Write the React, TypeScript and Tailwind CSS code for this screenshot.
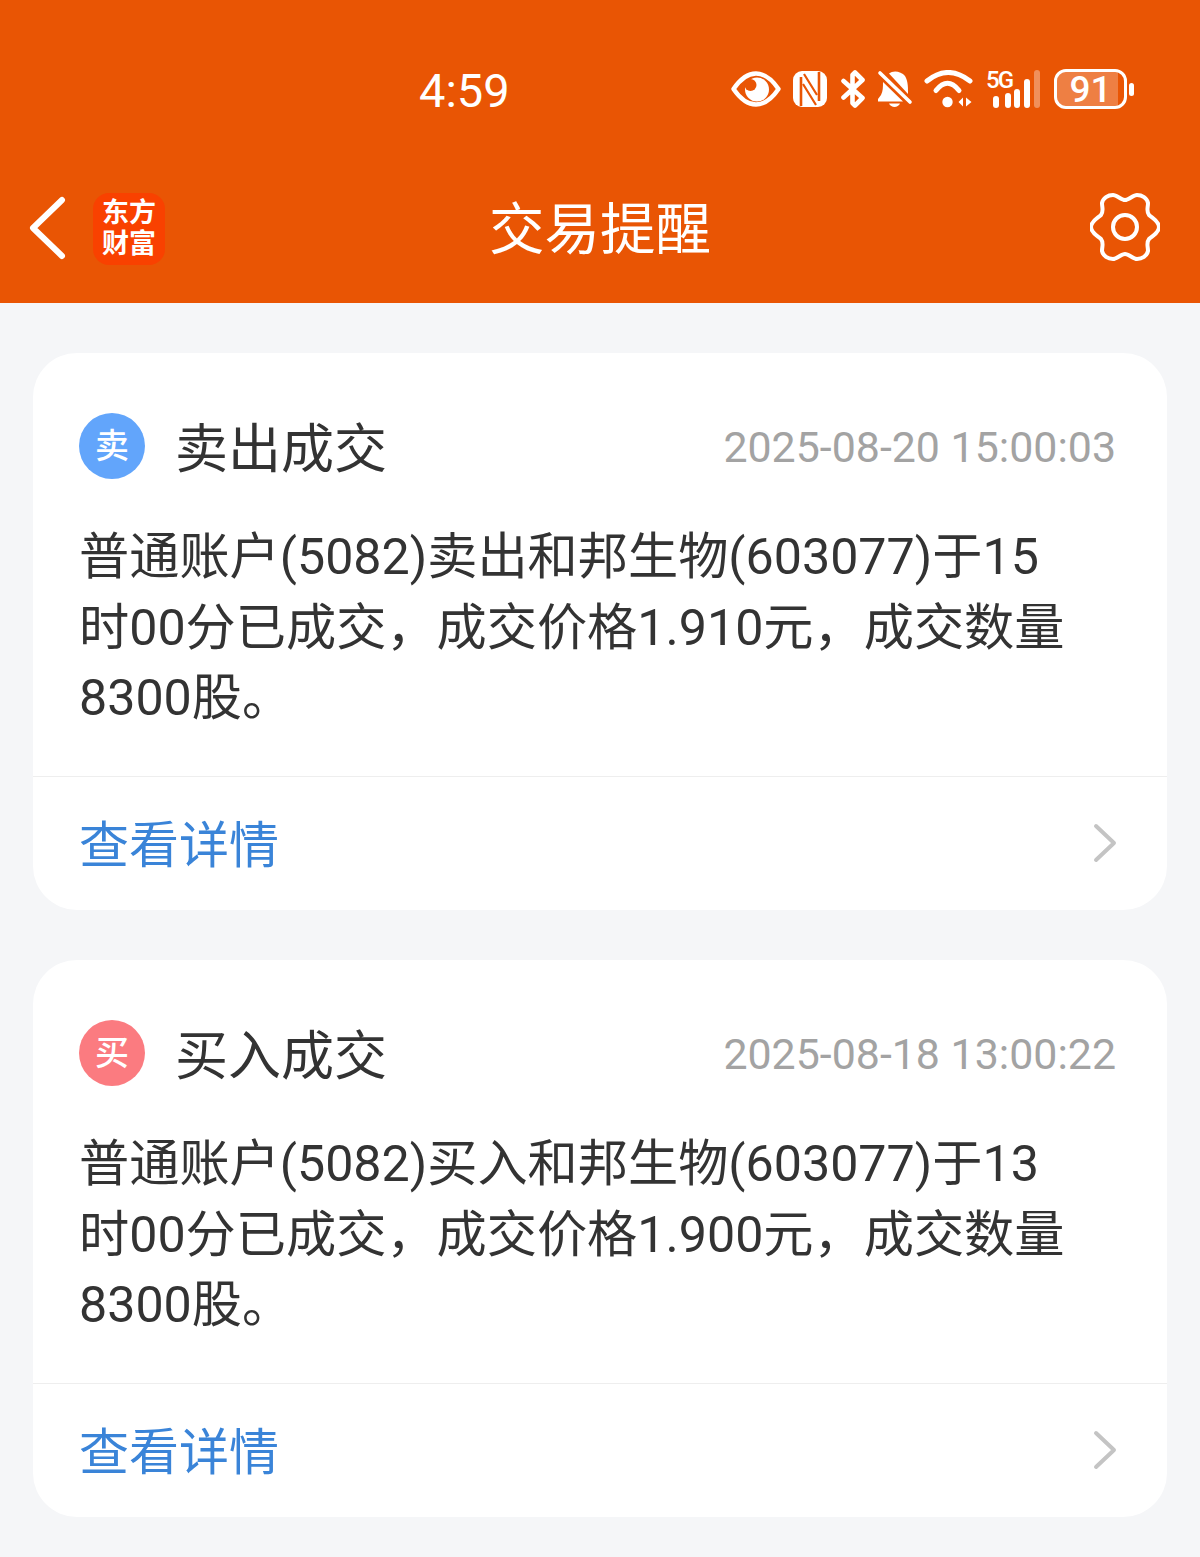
const cjk = { fontFamily: 'Roboto, "Noto Sans CJK SC", sans-serif' }

function StatusIcons() {
  return (
    <div className="flex items-center h-[40px]">
      {/* eye */}
      <svg width="50" height="36" viewBox="0 0 50 36">
        <path d="M2.5 18C10 7 18 2.5 25 2.5C32 2.5 40 7 47.5 18C40 29 32 33.5 25 33.5C18 33.5 10 29 2.5 18Z" fill="none" stroke="#fff" strokeWidth="4.4" strokeLinejoin="round" />
        <circle cx="26" cy="18.5" r="12" fill="#fff" />
        <circle cx="19.5" cy="14" r="6" fill="#e95504" />
      </svg>
      {/* nfc */}
      <svg width="36" height="38" viewBox="0 0 36 38" className="ml-[11px]">
        <rect x="1" y="1" width="34" height="36" rx="9" fill="#fff" />
        <path d="M9 7V36M27 2V31" stroke="#e95504" strokeWidth="2.6" fill="none" />
        <path d="M12 4L25 25M11 14L24 35" stroke="#e95504" strokeWidth="2.2" fill="none" />
      </svg>
      {/* bluetooth */}
      <svg width="24" height="38" viewBox="0 0 24 38" className="ml-[13px]">
        <path d="M2.5 11L21.5 28L14 35.5L11.5 33V5L14 2.5L21.5 10L2.5 27.5" fill="none" stroke="#fff" strokeWidth="4.6" strokeLinecap="round" strokeLinejoin="round" />
      </svg>
      {/* bell off */}
      <svg width="36" height="38" viewBox="0 0 36 38" className="ml-[12px]">
        <path d="M12 3.5C16 0 24 1 28 6C31 11 31 17 31 24Z" fill="#fff" />
        <path d="M6 12C6 17 6 21 4 25L1 29V31.5H26Z" fill="#fff" />
        <path d="M12 33.5C14 38 21 38 23 33.5Z" fill="#fff" />
        <path d="M3 3L33 32" stroke="#fff" strokeWidth="3.6" strokeLinecap="round" />
      </svg>
      {/* wifi */}
      <svg width="50" height="38" viewBox="0 0 50 38" className="ml-[11px]">
        <path d="M3 11Q24 -6 46 11" fill="none" stroke="#fff" strokeWidth="5" strokeLinecap="round" />
        <path d="M12 20.5Q23.5 6 35 20.5" fill="none" stroke="#fff" strokeWidth="5" strokeLinecap="round" />
        <circle cx="23.5" cy="32" r="5.2" fill="#fff" />
        <path d="M39 27.5V36.5L34.5 32Z M42 27.5V36.5L47.5 32Z" fill="#fff" />
      </svg>
      {/* 5G + signal */}
      <div className="relative w-[55px] h-[40px] ml-[12px]">
        <span className="absolute left-0 top-[2px] text-[24px] leading-[18px] font-medium text-white tracking-[-2px]">5G</span>
        <svg width="55" height="40" viewBox="0 0 55 40" className="absolute left-0 top-0">
          <rect x="7" y="27" width="6" height="12" rx="3" fill="#fff" />
          <rect x="19" y="24" width="6" height="15" rx="3" fill="#fff" />
          <rect x="28" y="20" width="6" height="19" rx="3" fill="#fff" />
          <rect x="38" y="10" width="6" height="29" rx="3" fill="#fff" />
          <rect x="48" y="1" width="6" height="38" rx="3" fill="#fff" fillOpacity="0.35" />
        </svg>
      </div>
      {/* battery */}
      <div className="relative ml-[13px] w-[73px] h-[40px] rounded-[12px] border-[3px] border-white overflow-hidden flex items-center justify-center">
        <div className="absolute left-0 top-0 bottom-0 w-[91%] bg-white/25" />
        <span className="relative text-[37px] leading-none font-medium text-white">91</span>
      </div>
      <div className="ml-[2px] w-[5px] h-[13px] rounded-full bg-white" />
    </div>
  )
}

function AlertCard({ badge, badgeColor, title, time, lines }: { badge: string; badgeColor: string; title: string; time: string; lines: string[] }) {
  return (
    <div className="mx-[33px] mb-[50px] bg-white rounded-[44px] overflow-hidden">
      <div className="flex items-center pl-[46px] pr-[51px] pt-[60px] h-[126px]">
        <div className={`w-[66px] h-[66px] rounded-full flex items-center justify-center text-white text-[34px] leading-none font-medium ${badgeColor}`}>{badge}</div>
        <div className="ml-[30px] pt-[9px] text-[53px] leading-none text-[#333]">{title}</div>
        <div className="ml-auto pt-[2px] text-[42.9px] leading-none text-[#a3a3a3]">{time}</div>
      </div>
      <div className="pl-[46px] pr-[100px] pt-[43px] text-[50.2px] leading-[70.5px] text-[#333] h-[297px]">
        {lines.map((l) => (
          <div key={l} className="whitespace-nowrap">{l}</div>
        ))}
      </div>
      <div className="flex items-center justify-between border-t border-[#eeeeee] h-[134px] pl-[46px] pr-[50px]">
        <span className="pt-[4px] text-[50px] leading-none text-[#3a84d8]">查看详情</span>
        <svg width="24" height="40" viewBox="0 0 24 40" className="mb-[2px]">
          <path d="M3 3L21 20L3 37" fill="none" stroke="#c4c4c4" strokeWidth="4" strokeLinecap="round" strokeLinejoin="round" />
        </svg>
      </div>
    </div>
  )
}

export default function App() {
  return (
    <div className="w-[1200px] h-[1557px] overflow-hidden bg-[#f5f6f8]" style={cjk}>
      <header className="h-[303px] bg-[#e95504] text-white">
        <div className="h-[178px] flex items-center justify-between pl-[419px] pr-[66px]">
          <span className="pt-[2px] text-[47px] leading-none">4:59</span>
          <StatusIcons />
        </div>
        <div className="relative h-[100px] flex items-center justify-center">
          <svg width="40" height="64" viewBox="0 0 40 64" className="absolute left-[28px] top-[18px]">
            <path d="M34 4L5 32L34 60" fill="none" stroke="#fff" strokeWidth="6" strokeLinecap="round" strokeLinejoin="round" />
          </svg>
          <div className="absolute left-[93px] top-[15px] w-[72px] h-[72px] rounded-[16px] bg-[#f94100] flex flex-col items-center justify-center text-[27px] leading-[31px] font-bold">
            <span>东方</span>
            <span>财富</span>
          </div>
          <h1 className="pt-[5px] text-[55.5px] leading-none font-normal">交易提醒</h1>
          <svg width="70" height="68" viewBox="0 0 70 68" className="absolute left-[1090px] top-[15px]">
            <path d="M35 7C39 7 43 2 47 2C52 2 57 5 58 10C58 15 56 18 59 22C62 25 69 28 69 34C69 40 62 43 59 46C56 50 58 53 58 58C57 63 52 66 47 66C43 66 39 61 35 61C31 61 27 66 23 66C18 66 13 63 12 58C12 53 14 50 11 46C8 43 1 40 1 34C1 28 8 25 11 22C14 18 12 15 12 10C13 5 18 2 23 2C27 2 31 7 35 7Z" fill="none" stroke="#fff" strokeWidth="4" />
            <circle cx="35" cy="34" r="12" fill="none" stroke="#fff" strokeWidth="4" />
          </svg>
        </div>
      </header>
      <main className="pt-[50px]">
        <AlertCard
          badge="卖"
          badgeColor="bg-[#62a5fb]"
          title="卖出成交"
          time="2025-08-20 15:00:03"
          lines={['普通账户(5082)卖出和邦生物(603077)于15', '时00分已成交，成交价格1.910元，成交数量', '8300股。']}
        />
        <AlertCard
          badge="买"
          badgeColor="bg-[#fb7b80]"
          title="买入成交"
          time="2025-08-18 13:00:22"
          lines={['普通账户(5082)买入和邦生物(603077)于13', '时00分已成交，成交价格1.900元，成交数量', '8300股。']}
        />
      </main>
    </div>
  )
}
